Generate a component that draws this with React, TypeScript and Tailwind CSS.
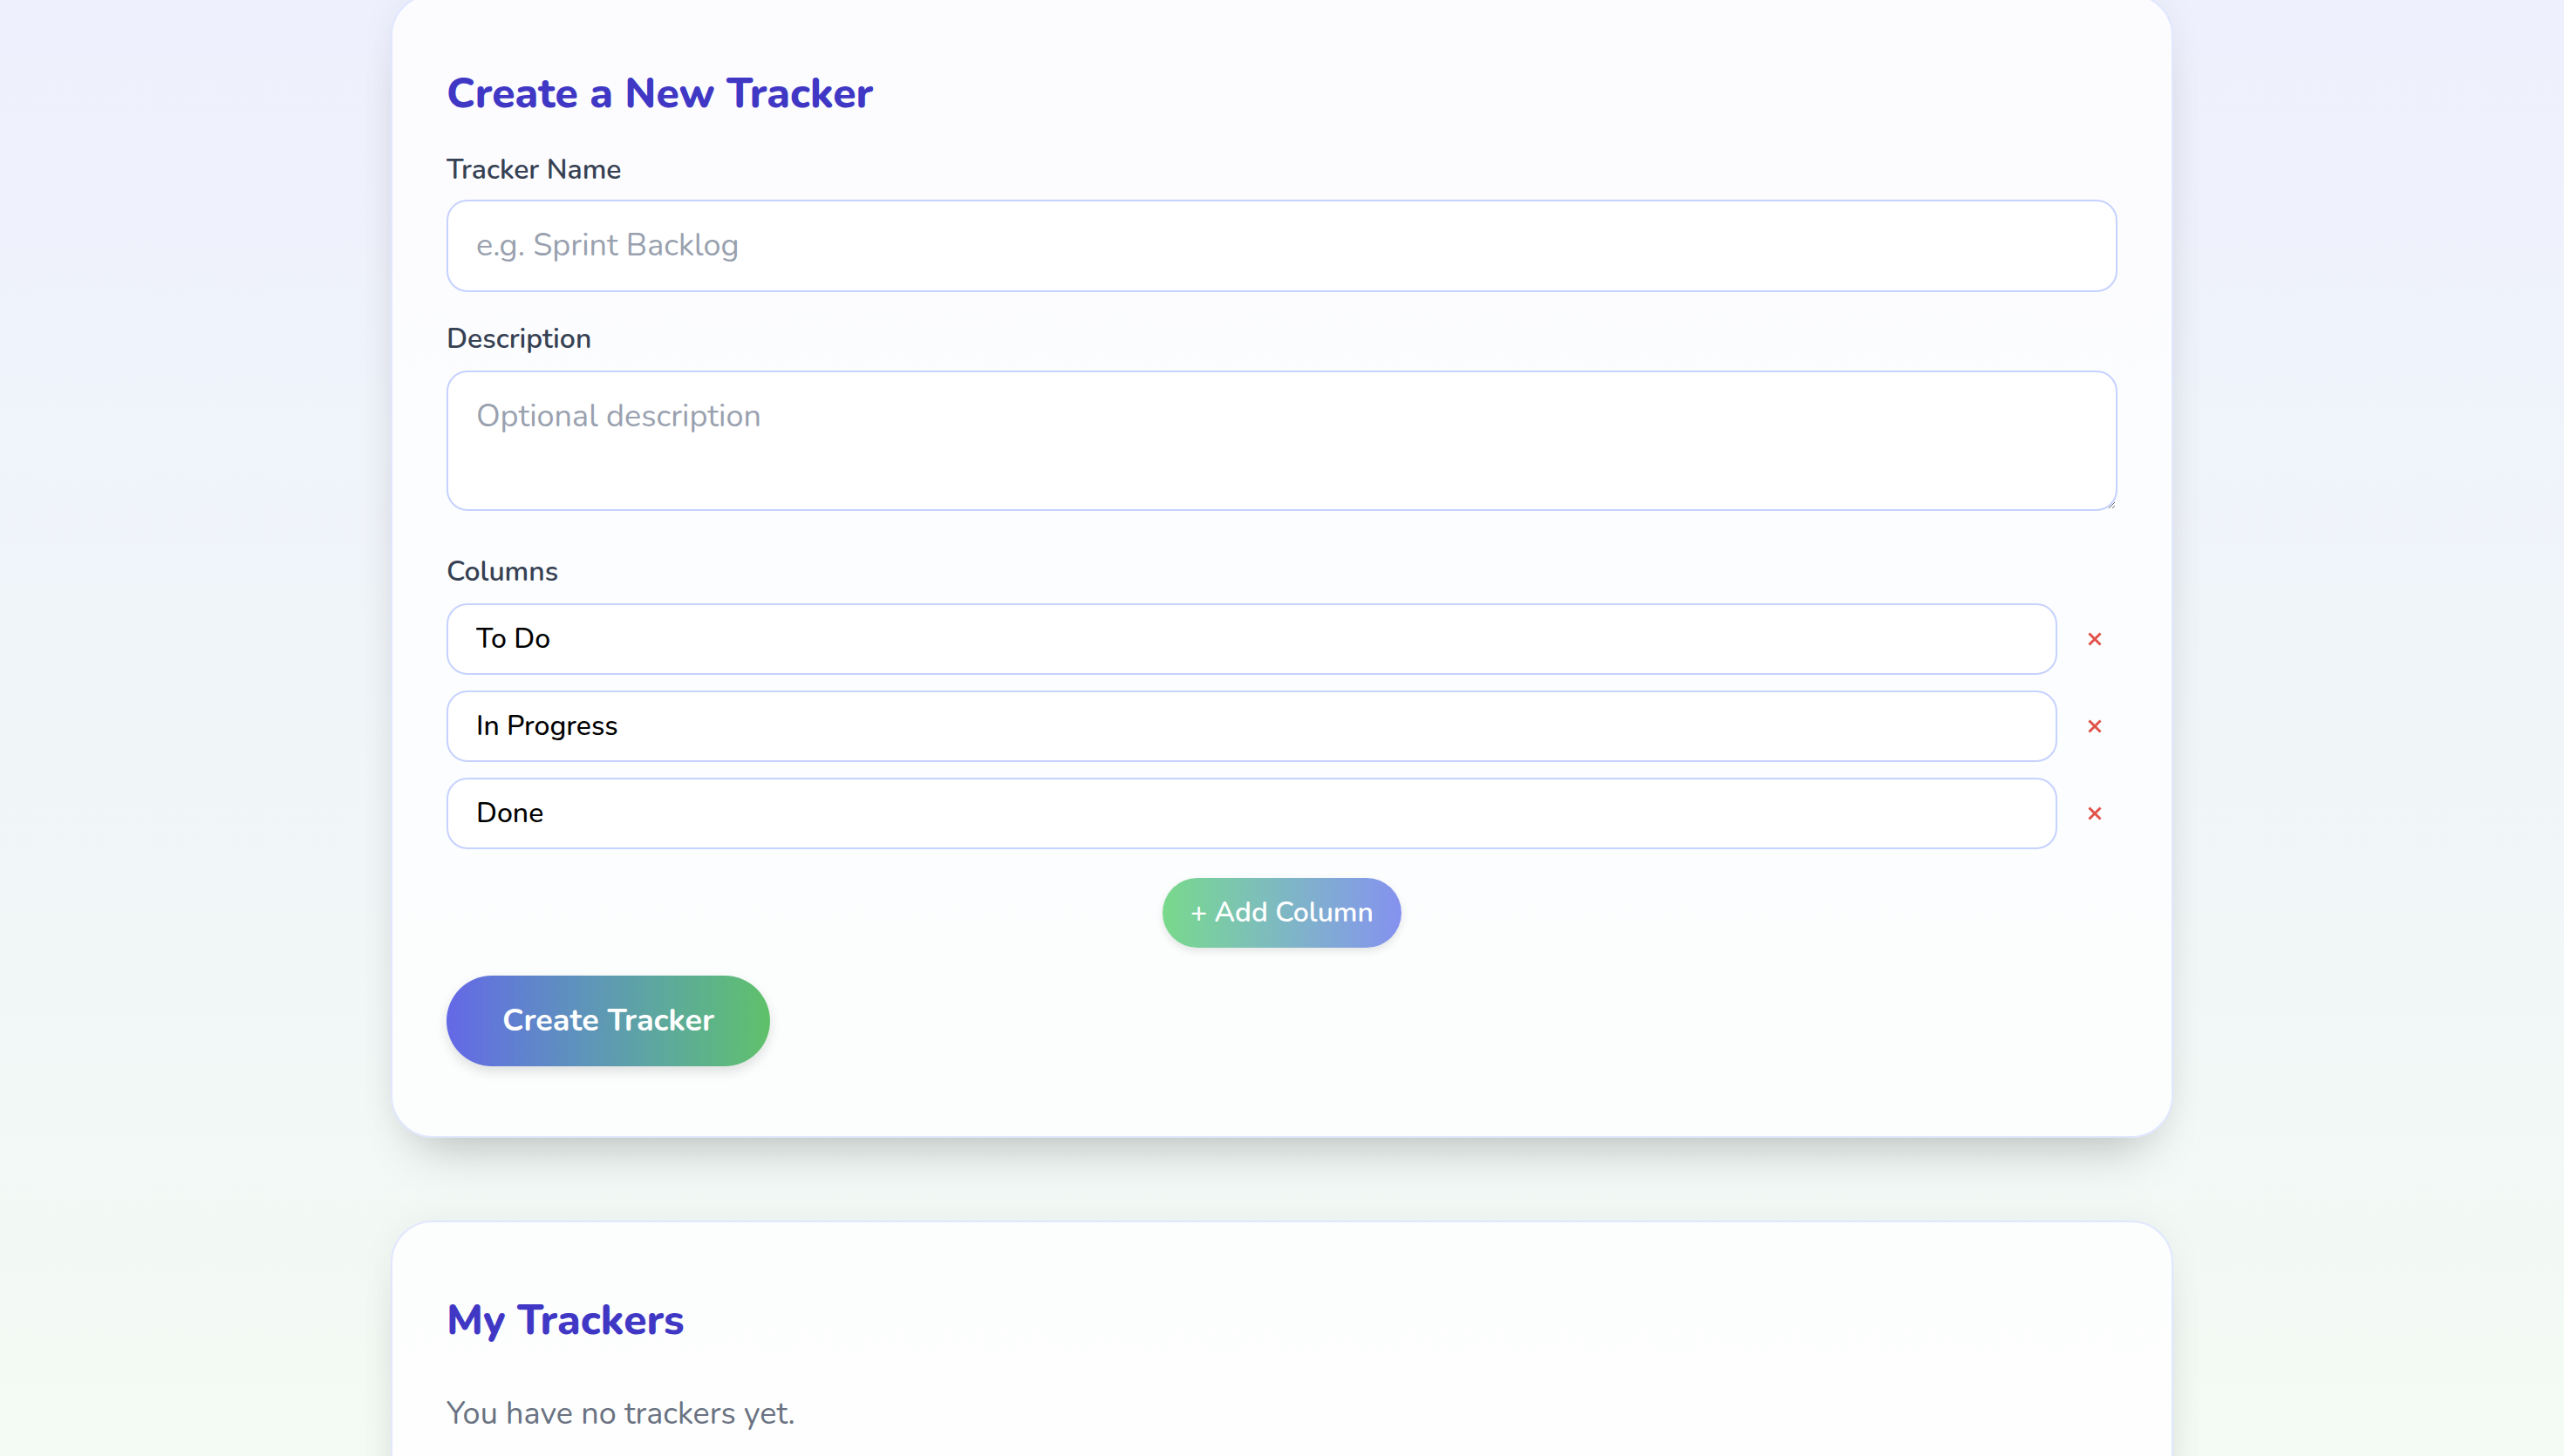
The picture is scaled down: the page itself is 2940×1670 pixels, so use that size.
import { useState } from 'react'

function RemoveIcon() {
  return (
    <svg viewBox="0 0 16 16" className="h-[16px] w-[16px]" fill="none" stroke="currentColor" strokeWidth={3} strokeLinecap="square">
      <path d="M2.5 2.5l11 11M13.5 2.5l-11 11" />
    </svg>
  )
}

export default function App() {
  const [name, setName] = useState('')
  const [description, setDescription] = useState('')
  const [columns, setColumns] = useState(['To Do', 'In Progress', 'Done'])

  const updateColumn = (i: number, value: string) => {
    setColumns(columns.map((c, idx) => (idx === i ? value : c)))
  }

  const removeColumn = (i: number) => {
    setColumns(columns.filter((_, idx) => idx !== i))
  }

  const handleSubmit = (e: React.FormEvent) => {
    e.preventDefault()
  }

  return (
    <div className="h-screen overflow-hidden bg-linear-to-b from-[#eef0fd] to-[#f3fbf4] font-[Nunito,Lato,sans-serif]">
      <div className="mx-auto w-[2044px]">
        <section className="-mt-[7px] rounded-[48px] border-2 border-indigo-100 bg-white/80 px-[62px] pt-[80px] pb-[80px] shadow-[0_40px_60px_-30px_rgba(0,0,0,0.22),0_0_40px_rgba(0,0,0,0.05)]">
          <h2 className="mb-[32px] text-[48px] leading-[64px] font-extrabold text-[#4038c5]">Create a New Tracker</h2>
          <form onSubmit={handleSubmit}>
            <label className="mb-[10px] block text-[32px] leading-[48px] font-semibold text-gray-700">Tracker Name</label>
            <input
              type="text"
              value={name}
              onChange={(e) => setName(e.target.value)}
              placeholder="e.g. Sprint Backlog"
              className="mb-[30px] block w-full rounded-[24px] border-2 border-indigo-200 bg-white px-[32px] py-[23px] text-[36px] leading-[56px] text-black outline-none placeholder:text-gray-400"
            />
            <label className="mb-[12px] block text-[32px] leading-[48px] font-semibold text-gray-700">Description</label>
            <textarea
              value={description}
              onChange={(e) => setDescription(e.target.value)}
              placeholder="Optional description"
              className="mb-[46px] block h-[161px] w-full resize-y rounded-[24px] border-2 border-indigo-200 bg-white px-[32px] py-[23px] text-[36px] leading-[56px] text-black outline-none placeholder:text-gray-400"
            />
            <label className="mb-[12px] block text-[32px] leading-[48px] font-semibold text-gray-700">Columns</label>
            <div className="flex flex-col gap-[18px]">
              {columns.map((col, i) => (
                <div key={i} className="flex items-center gap-4">
                  <input
                    type="text"
                    value={col}
                    onChange={(e) => updateColumn(i, e.target.value)}
                    className="min-w-0 flex-1 rounded-[24px] border-2 border-indigo-200 bg-white px-[32px] py-[15px] text-[32px] leading-[48px] font-medium text-black outline-none"
                  />
                  <button
                    type="button"
                    onClick={() => removeColumn(i)}
                    className="flex h-[48px] w-[53px] items-center justify-center text-[#e0524a]"
                  >
                    <RemoveIcon />
                  </button>
                </div>
              ))}
            </div>
            <div className="mt-[33px] flex justify-center">
              <button
                type="button"
                onClick={() => setColumns([...columns, ''])}
                className="rounded-full bg-linear-to-r from-[#78d98a] to-[#8591ef] px-[32px] py-[16px] text-[32px] leading-[48px] font-semibold text-white shadow-[0_4px_10px_rgba(0,0,0,0.1)]"
              >
                + Add Column
              </button>
            </div>
            <button
              type="submit"
              className="mt-[32px] rounded-full bg-linear-to-r from-[#6467e6] to-[#5fc169] px-[64px] py-[24px] text-[36px] leading-[56px] font-bold text-white shadow-[0_6px_14px_rgba(0,0,0,0.12)]"
            >
              Create Tracker
            </button>
          </form>
        </section>

        <section className="mt-[95px] rounded-[48px] border-2 border-indigo-100 bg-white/80 px-[62px] pt-[80px] pb-[80px] shadow-[0_40px_60px_-30px_rgba(0,0,0,0.22),0_0_40px_rgba(0,0,0,0.05)]">
          <h2 className="mb-[48px] text-[48px] leading-[64px] font-extrabold text-[#4038c5]">My Trackers</h2>
          <p className="text-[36px] leading-[56px] text-gray-500">You have no trackers yet.</p>
        </section>
      </div>
    </div>
  )
}
